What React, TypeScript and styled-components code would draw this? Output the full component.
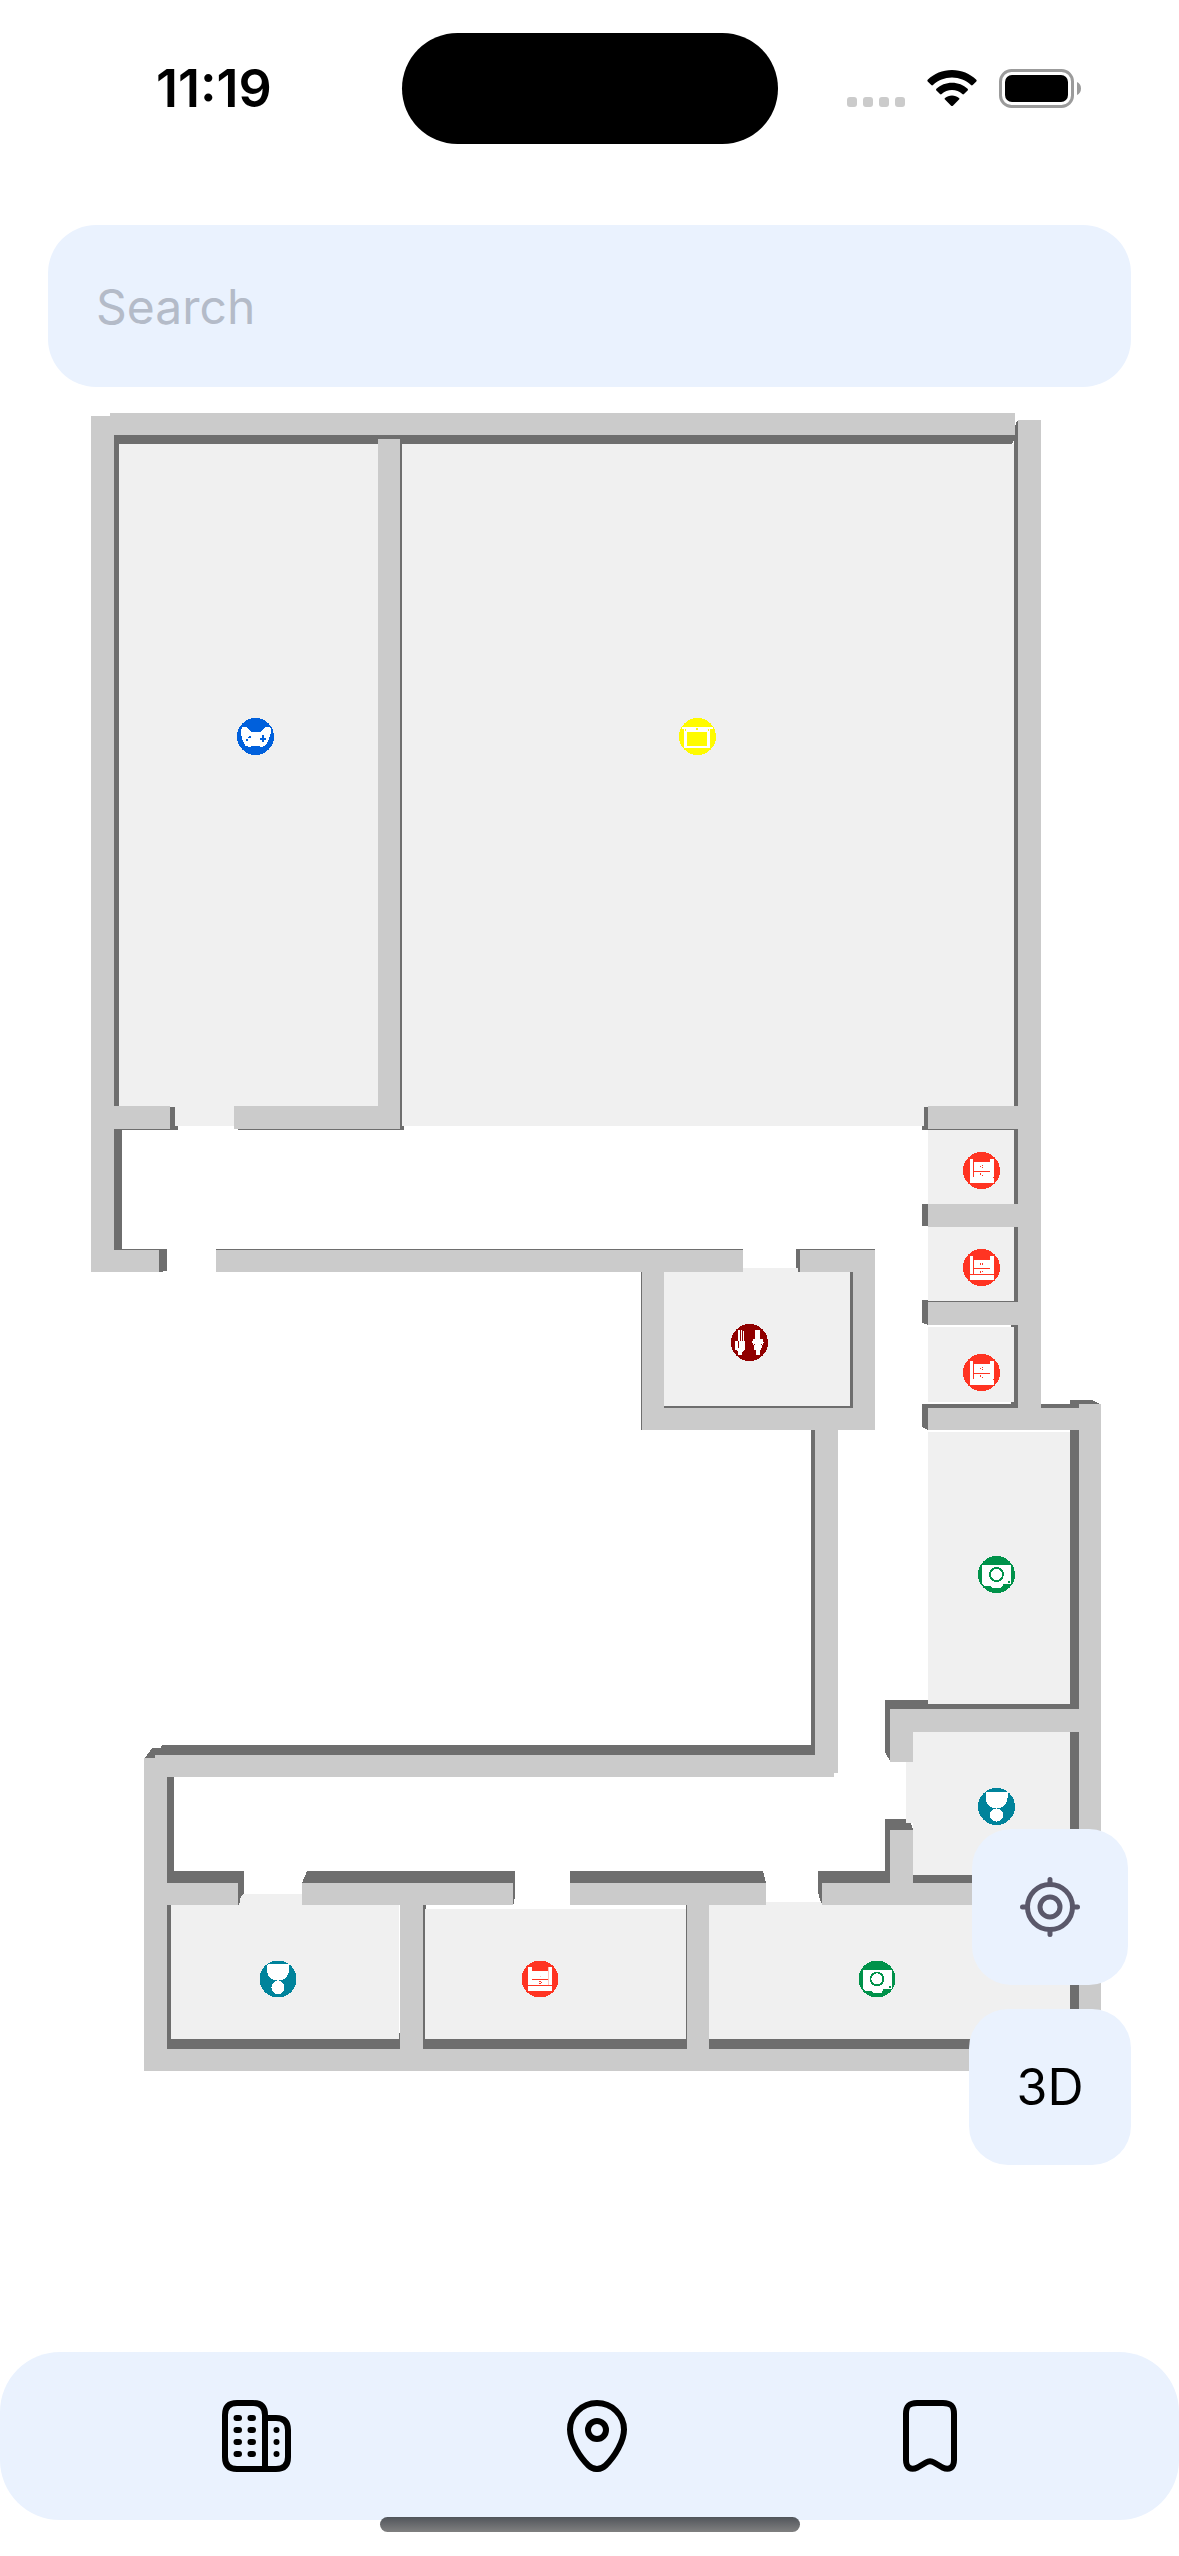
import React from "react";
import styled, { createGlobalStyle } from "styled-components";

const color = {
  surface: "#eaf2fe",
  placeholder: "#b4bbc8",
  control: "#5a586a",
  wall: "#cbcbcb",
  shade: "#6e6e6e",
  floor: "#f0f0f0",
};

const GlobalStyle = createGlobalStyle`
  *, *::before, *::after { box-sizing: border-box; }
  body {
    margin: 0;
    background: #ffffff;
    color: #000000;
    font-family: Inter, "Liberation Sans", sans-serif;
  }
  button { font: inherit; color: inherit; border: 0; padding: 0; cursor: pointer; }
  svg { display: block; }
`;

const Screen = styled.div`
  position: relative;
  display: flex;
  flex-direction: column;
  min-height: 100vh;
  padding-bottom: 36px;
  background: #ffffff;
`;

const StatusBar = styled.header`
  display: grid;
  grid-template-columns: 1fr 376px 1fr;
  align-items: center;
  padding: 33px 98px 0 156px;
  height: 144px;
`;

const Time = styled.time`
  font-size: 52px;
  line-height: 60px;
  font-weight: 600;
`;

const Island = styled.div`
  width: 376px;
  height: 111px;
  margin-left: -29px;
  border-radius: 56px;
  background: #000000;
`;

const StatusIcons = styled.div`
  display: flex;
  justify-content: flex-end;
  align-items: flex-end;
  gap: 22px;
`;

const SearchForm = styled.form`
  margin: 81px 48px 0;
`;

const SearchInput = styled.input`
  display: block;
  width: 100%;
  height: 162px;
  padding: 0 48px;
  border: 0;
  border-radius: 48px;
  outline: none;
  background: ${color.surface};
  font-family: inherit;
  font-size: 48px;
  line-height: 60px;
  color: #000000;
  &::placeholder {
    color: ${color.placeholder};
    opacity: 1;
  }
`;

const MapArea = styled.main`
  position: relative;
  flex: 1;
`;

const Plan = styled.svg`
  width: 100%;
  height: auto;
`;

const MapControls = styled.div`
  position: absolute;
  right: 48px;
  bottom: 187px;
  display: flex;
  flex-direction: column;
  align-items: center;
  gap: 24px;
`;

const MapButton = styled.button<{ $wide?: boolean }>`
  display: flex;
  align-items: center;
  justify-content: center;
  width: ${(p) => (p.$wide ? 162 : 156)}px;
  height: 156px;
  border-radius: 39px;
  background: ${color.surface};
  font-size: 50px;
  line-height: 60px;
`;

const TabBar = styled.nav`
  display: flex;
  align-items: center;
  justify-content: space-between;
  height: 168px;
  padding: 0 222px;
  border-radius: 60px;
  background: ${color.surface};
`;

const Tab = styled.button`
  background: none;
`;

const HomeIndicator = styled.div`
  position: absolute;
  bottom: 24px;
  left: 50%;
  width: 420px;
  height: 15px;
  margin-left: -210px;
  border-radius: 8px;
  background: linear-gradient(#51555b, #808080);
`;

type Box = [x1: number, y1: number, x2: number, y2: number];

const floors: Box[] = [
  [119, 444, 378, 1126],
  [402, 444, 1014, 1126],
  [928, 1130, 1014, 1204],
  [928, 1227, 1014, 1301],
  [928, 1327, 1014, 1402],
  [664, 1268, 850, 1406],
  [928, 1432, 1070, 1704],
  [913, 1732, 1070, 1875],
  [906, 1762, 913, 1823],
  [171, 1905, 399, 2039],
  [238, 1894, 302, 1905],
  [425, 1909, 686, 2039],
  [709, 1905, 1070, 2039],
  [766, 1902, 822, 1905],
];

const shades: Box[] = [
  [114, 435, 1011, 444],
  [114, 444, 119, 1106],
  [400, 444, 402, 1130],
  [402, 1126, 404, 1130],
  [238, 1129, 402, 1130],
  [170, 1107, 175, 1130],
  [175, 1126, 178, 1130],
  [114, 1129, 170, 1130],
  [114, 1130, 122, 1250],
  [122, 1249, 167, 1250],
  [159, 1250, 167, 1271],
  [159, 1271, 163, 1272],
  [216, 1249, 743, 1250],
  [796, 1249, 875, 1250],
  [796, 1250, 800, 1268],
  [798, 1268, 800, 1272],
  [641, 1272, 642, 1430],
  [850, 1272, 853, 1408],
  [664, 1406, 853, 1408],
  [924, 1107, 928, 1130],
  [922, 1126, 928, 1130],
  [928, 1129, 1018, 1130],
  [1014, 425, 1018, 1408],
  [922, 1204, 928, 1226],
  [928, 1301, 1018, 1302],
  [1011, 1325, 1018, 1327],
  [1011, 1402, 1018, 1404],
  [928, 1404, 1018, 1408],
  [1041, 1404, 1079, 1408],
  [1070, 1430, 1079, 2049],
  [811, 1430, 815, 1755],
  [162, 1745, 815, 1755],
  [885, 1700, 928, 1709],
  [928, 1704, 1079, 1709],
  [885, 1819, 890, 1883],
  [167, 1777, 174, 1883],
  [174, 1871, 244, 1883],
  [167, 1905, 171, 2049],
  [570, 1871, 762, 1883],
  [818, 1871, 890, 1883],
  [913, 1875, 1079, 1883],
  [423, 1905, 425, 2049],
  [425, 1905, 426, 1909],
  [686, 1905, 687, 2049],
  [399, 2033, 400, 2039],
  [171, 2039, 1079, 2049],
];

const bevels = [
  "1011,435 1016,435 1012,444 1011,444",
  "1014,430 1017,421 1018,421 1018,430",
  "922,1300 928,1300 928,1325 922,1323",
  "922,1404 928,1404 928,1430 922,1427",
  "1070,1400 1092,1400 1100,1404 1070,1404",
  "885,1700 890,1700 890,1761 885,1752",
  "885,1819 906,1819 906,1823 911,1823 913,1830 885,1830",
  "145,1758 152,1748 161,1748 162,1745 166,1758",
  "238,1871 244,1871 244,1894 241,1896 239,1905 238,1905",
  "302,1883 307,1871 515,1871 515,1895 514,1904 513,1904 513,1883",
  "762,1871 763,1871 766,1883 762,1883",
  "818,1871 822,1871 822,1903 821,1903 818,1892",
];

const walls: Box[] = [
  [91, 416, 114, 1272],
  [110, 413, 1015, 435],
  [378, 439, 400, 1129],
  [1018, 420, 1041, 1408],
  [114, 1106, 170, 1129],
  [234, 1106, 400, 1129],
  [114, 1250, 159, 1272],
  [216, 1250, 743, 1272],
  [800, 1250, 875, 1272],
  [642, 1272, 664, 1430],
  [853, 1272, 875, 1430],
  [664, 1408, 853, 1430],
  [928, 1106, 1018, 1129],
  [928, 1204, 1018, 1227],
  [928, 1302, 1018, 1325],
  [928, 1408, 1079, 1430],
  [1079, 1404, 1101, 2071],
  [815, 1430, 838, 1773],
  [155, 1755, 834, 1777],
  [890, 1709, 1079, 1732],
  [890, 1709, 913, 1762],
  [890, 1830, 913, 1883],
  [144, 1758, 167, 2071],
  [167, 1883, 238, 1905],
  [302, 1883, 513, 1905],
  [570, 1883, 766, 1905],
  [822, 1883, 1079, 1905],
  [400, 1905, 423, 2049],
  [687, 1905, 709, 2049],
  [167, 2049, 1101, 2071],
];

const Boxes = ({ items, fill }: { items: Box[]; fill: string }) => (
  <g fill={fill}>
    {items.map(([x1, y1, x2, y2], i) => (
      <rect key={i} x={x1} y={y1} width={x2 - x1} height={y2 - y1} />
    ))}
  </g>
);

type Kind = "games" | "hall" | "restroom" | "desk" | "drawer" | "shelf" | "camera" | "award";

const markerColor: Record<Kind, string> = {
  games: "#0060dc",
  hall: "#fffb00",
  restroom: "#900000",
  desk: "#ff3422",
  drawer: "#ff3422",
  shelf: "#ff3422",
  camera: "#00924a",
  award: "#00839b",
};

const Glyph = ({ kind }: { kind: Kind }) => {
  const c = markerColor[kind];
  switch (kind) {
    case "games":
      return (
        <>
          <path
            fill="#fff"
            d="M-14.5-7 L-13-9.5 L-11-10 L-9-9 L-4-4.5 H5 L10-9.5 L12-10 L15-8.5 L15-3 L13 4 L10 9 L6 10.5 L2 9 H-2 L-6 10.5 L-10 9.5 L-13 4 L-14.5-2Z"
          />
          <path fill={c} d="M4.500 1H6.500V-1.500H8.500V1H10.500V3H8.500V5.500H6.500V3H4.500Z" />
          <path fill={c} d="M-9.500 2H-7.500V4.500H-9.500Z M-6.500-1H-4.500V1.500H-7.500V0H-6.500Z" />
        </>
      );
    case "hall":
      return (
        <>
          <path fill="#fff" d="M-15.500-9.500H15.500V-7.500H12.500V11.500H-13.500V-7.500H-15.500Z" />
          <path
            fill={c}
            d="M-12.500-7.500H-11.500V-5.500H-12.500Z M-10.500-4.500H9.500V9.500H-10.500Z M-1.500-8.500H.5V-6.500H-1.500Z M10.500-7.500H11.500V-5.500H10.500Z"
          />
        </>
      );
    case "restroom":
      return (
        <>
          <path
            fill="#fff"
            d="M-11.500-12.500H-9.500V-1.500H-8.800V-12.500H-7.500V-1.500H-6.800V-11.500H-5.700V-1.500H-4.500V7L-6.500 9H-7.500V12.500H-11.500V9L-14.500 7V-1.500H-11.500Z"
          />
          <path
            fill="#fff"
            d="M5.500-12.500H7V-4H7.700V-12.500H9V-4H9.500V-12.500H10.500V-4H13L14 0L12.500 3L11.500 7.500H10V12.500H6.500V7.500H5L4 3L2.500 0L3.500-4H5.500Z"
          />
          <path fill={c} d="M-12-1.500H-11V5H-12Z M4 1H5V2.500H4Z M11.500 1H12.500V2.500H11.500Z M5 8H11V8.800H5Z" />
        </>
      );
    case "desk":
      return (
        <>
          <path fill="#fff" d="M-11.500-11.500H-8.500V-8.500H8.500V-11.500H12.500V12.500H-11.500Z" />
          <path
            fill={c}
            d="M-8.500-11.500H-7.500V6.500H-8.500Z M-7.500.5H8.500V1.500H-7.500Z M-1.500-4.500H-.5V-3.500H-1.500Z M.5-5.500H1.500V-4.500H.5Z M0-3.500H1V-2.500H0Z M-1.500 2.500H-.5V4H-1.500Z M0 4H1V5H0Z M11.500 6.500H12.500V7.500H11.500Z"
          />
        </>
      );
    case "drawer":
      return (
        <>
          <path fill="#fff" d="M-11.500-11.500H-8.500V-7.500H8.500V-11.500H12.500V12.500H-11.500Z" />
          <path
            fill={c}
            d="M-8.500-11.500H-7.500V6.500H-8.500Z M-7.500.5H8.500V1.500H-7.500Z M-11.500 6.500H12.500V7.500H-11.500Z M-1.500-5H-.5V-3H-1.500Z M.5-5H1.500V-3H.5Z M-1.500 3H-.5V5H-1.500Z M0 3H1.500V4H0Z"
          />
        </>
      );
    case "shelf":
      return (
        <>
          <path fill="#fff" d="M-12-12H-8V-8H8V-12H12V12H-12Z" />
          <path fill={c} d="M-8 0H8V1H-8Z M-12 6H12V7H-12Z M-1 2H1V3H-1Z M1 3H2V4H1Z M-1 4H1V5H-1Z" />
          <path fill="#ffc4be" d="M8-12H9V6H8Z M0-3H1V-2H0Z" />
        </>
      );
    case "camera":
      return (
        <>
          <path fill="#fff" d="M-14.500-9.500H14.500V9.500H7L4.500 13.500H-4.500L-5.500 11.500H-11.500L-14.500 9Z" />
          <circle r="6.500" fill="none" stroke={c} strokeWidth="1.800" />
          <path fill={c} d="M11.500 6.500H13.500V8.500H11.500Z" />
        </>
      );
    case "award":
      return (
        <>
          <path fill="#fff" d="M-11-14L-10-15H10L11-14V-9A11 11 0 0 1-11-9Z" />
          <circle cy="8.500" r="6.500" fill="#fff" />
          <path fill={c} d="M-8 1H-1V2H-8Z M1 1H8V2H1Z" />
        </>
      );
  }
};

const markers: { kind: Kind; x: number; y: number; label: string }[] = [
  { kind: "games", x: 255.5, y: 736.5, label: "Game room" },
  { kind: "hall", x: 697.5, y: 736.5, label: "Hall" },
  { kind: "desk", x: 981.5, y: 1170.5, label: "Office" },
  { kind: "drawer", x: 981.5, y: 1267.5, label: "Office" },
  { kind: "desk", x: 981.5, y: 1372.5, label: "Office" },
  { kind: "restroom", x: 749.5, y: 1342.5, label: "Restroom" },
  { kind: "camera", x: 996.5, y: 1574.5, label: "Studio" },
  { kind: "award", x: 996.5, y: 1806.5, label: "Awards" },
  { kind: "award", x: 278, y: 1979, label: "Awards" },
  { kind: "shelf", x: 540, y: 1979, label: "Office" },
  { kind: "camera", x: 877, y: 1979, label: "Studio" },
];

const FloorPlan = () => (
  <Plan viewBox="0 387 1179 1700" shapeRendering="crispEdges" role="img" aria-label="Floor plan">
    <Boxes items={floors} fill={color.floor} />
    <Boxes items={shades} fill={color.shade} />
    <g fill={color.shade}>
      {bevels.map((points) => (
        <polygon key={points} points={points} />
      ))}
    </g>
    <Boxes items={walls} fill={color.wall} />
    {markers.map((m, i) => (
      <g key={i} transform={`translate(${m.x} ${m.y})`} aria-label={m.label}>
        <circle r="18.500" fill={markerColor[m.kind]} />
        <Glyph kind={m.kind} />
      </g>
    ))}
  </Plan>
);

const SignalIcon = () => (
  <svg width="58" height="11" viewBox="0 0 58 11" fill="#cbcbcb" aria-hidden="true">
    {[0, 16, 32, 48].map((x) => (
      <rect key={x} x={x} width="10" height="10" rx="3" />
    ))}
  </svg>
);

const WifiIcon = () => (
  <svg width="50" height="38" viewBox="0 0 50 38" aria-hidden="true">
    <path d="M25 0C34.500 0 43 3.700 49.300 9.700C49.800 10.200 49.800 10.900 49.300 11.400L45.700 15C45.200 15.500 44.500 15.500 44 15C39 10.300 32.300 7.500 25 7.500S11 10.300 6 15C5.500 15.500 4.800 15.500 4.300 15L.7 11.400C.2 10.900.2 10.200.7 9.700C7 3.700 15.500 0 25 0Z" />
    <path d="M25 12.700C31 12.700 36.500 15 40.600 18.700C41.100 19.200 41.100 20 40.600 20.500L37 24C36.500 24.500 35.800 24.500 35.300 24C32.500 21.500 29 20.100 25 20.100S17.500 21.500 14.700 24C14.200 24.500 13.500 24.500 13 24L9.400 20.500C8.900 20 8.900 19.200 9.400 18.700C13.500 15 19 12.700 25 12.700Z" />
    <path d="M25 25.400C27.700 25.400 30.100 26.300 32 27.900C32.500 28.300 32.500 29.100 32 29.600L25.900 35.700C25.400 36.200 24.600 36.200 24.100 35.700L18 29.600C17.500 29.100 17.500 28.300 18 27.900C19.900 26.300 22.300 25.400 25 25.400Z" />
  </svg>
);

const BatteryIcon = () => (
  <svg width="82" height="39" viewBox="0 0 82 39" aria-hidden="true">
    <rect x="1.500" y="1.500" width="72" height="36" rx="11" fill="none" stroke="#9b9b9b" strokeWidth="3" />
    <rect x="6" y="6" width="63" height="27" rx="7" />
    <path d="M78 13C80.500 14 82 16.500 82 19.500S80.500 25 78 26Z" fill="#9b9b9b" />
  </svg>
);

const LocateIcon = () => (
  <svg width="60" height="60" viewBox="0 0 60 60" fill="none" stroke={color.control} strokeWidth="5" strokeLinecap="round" aria-hidden="true">
    <circle cx="30" cy="30" r="22.500" />
    <circle cx="30" cy="30" r="10" />
    <path d="M30 2.500V6M30 54V57.500M2.500 30H6M54 30H57.500" />
  </svg>
);

const BuildingIcon = () => (
  <svg width="69" height="72" viewBox="0 0 69 72" fill="none" stroke="#000" strokeWidth="6" strokeLinecap="round" aria-hidden="true">
    <path d="M43 69H15C7 69 3 65 3 57V15C3 7 7 3 15 3H31C39 3 43 7 43 15Z" strokeLinejoin="round" />
    <path d="M43 18H54C62 18 66 22 66 30V57C66 65 62 69 54 69H43" />
    <path d="M14.500 18H17M28.500 18H31M14.500 30H17M28.500 30H31M14.500 42H17M28.500 42H31M14.500 54H17M28.500 54H31M54.500 30V30.100M54.500 42V42.100M54.500 54V54.100" />
  </svg>
);

const PinIcon = () => (
  <svg width="60" height="72" viewBox="0 0 60 72" fill="none" stroke="#000" strokeWidth="6" aria-hidden="true">
    <path d="M30 3C45 3 57 15 57 29.500C57 41 48 56.500 38.500 65.500C33.500 70.200 26.500 70.200 21.500 65.500C12 56.500 3 41 3 29.500C3 15 15 3 30 3Z" />
    <circle cx="30" cy="30" r="9" />
  </svg>
);

const BookmarkIcon = () => (
  <svg width="54" height="72" viewBox="0 0 54 72" fill="none" stroke="#000" strokeWidth="6" strokeLinejoin="round" aria-hidden="true">
    <path d="M3 14C3 6 6 3 14 3H40C48 3 51 6 51 14V60C51 68 46 70.500 39.500 67.500L31 62.500C28 60.700 26 60.700 23 62.500L14.500 67.500C8 70.500 3 68 3 60Z" />
  </svg>
);

export default function App() {
  return (
    <>
      <GlobalStyle />
      <Screen>
        <StatusBar>
          <Time>11:19</Time>
          <Island />
          <StatusIcons>
            <SignalIcon />
            <WifiIcon />
            <BatteryIcon />
          </StatusIcons>
        </StatusBar>
        <SearchForm role="search" onSubmit={(e) => e.preventDefault()}>
          <SearchInput type="text" placeholder="Search" aria-label="Search" />
        </SearchForm>
        <MapArea>
          <FloorPlan />
          <MapControls>
            <MapButton type="button" aria-label="Centre on my location">
              <LocateIcon />
            </MapButton>
            <MapButton type="button" $wide>
              3D
            </MapButton>
          </MapControls>
        </MapArea>
        <TabBar aria-label="Main">
          <Tab type="button" aria-label="Buildings">
            <BuildingIcon />
          </Tab>
          <Tab type="button" aria-label="Map">
            <PinIcon />
          </Tab>
          <Tab type="button" aria-label="Saved">
            <BookmarkIcon />
          </Tab>
        </TabBar>
        <HomeIndicator />
      </Screen>
    </>
  );
}
